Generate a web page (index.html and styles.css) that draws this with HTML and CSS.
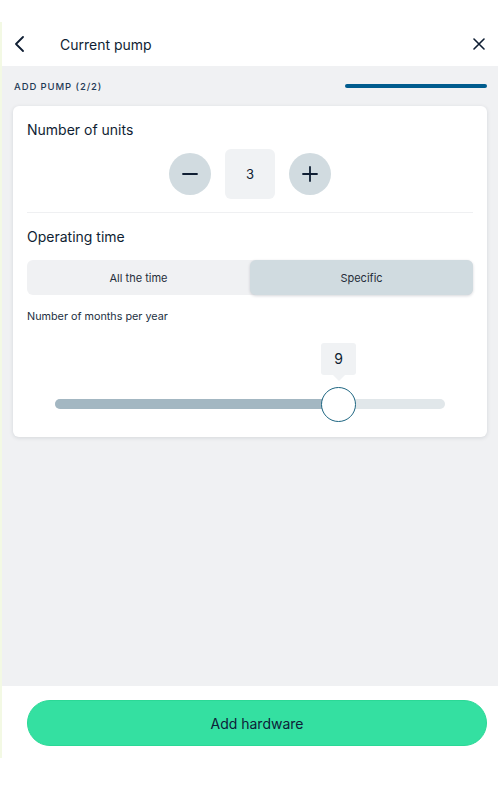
FILE: index.html
```html
<!DOCTYPE html>
<html lang="en">
<head>
<meta charset="utf-8">
<title>Current pump</title>
<link rel="stylesheet" href="styles.css">
</head>
<body>
<div class="app">
  <header class="header">
    <button class="icon-btn back" aria-label="Back">
      <svg width="12" height="16" viewBox="0 0 12 16"><path d="M9 1 L2 8 L9 15" fill="none" stroke="#0f1e33" stroke-width="1.8" stroke-linecap="round" stroke-linejoin="round"/></svg>
    </button>
    <h1 class="title">Current pump</h1>
    <button class="icon-btn close" aria-label="Close">
      <svg width="12" height="12" viewBox="0 0 12 12"><path d="M1 1 L11 11 M11 1 L1 11" fill="none" stroke="#0f1e33" stroke-width="1.6" stroke-linecap="round"/></svg>
    </button>
  </header>
  <main class="main">
    <div class="step-row">
      <span class="step-label">ADD PUMP (2/2)</span>
      <span class="progress"></span>
    </div>
    <section class="card">
      <h2 class="card-title">Number of units</h2>
      <div class="stepper">
        <button class="round-btn" aria-label="Decrease">
          <svg width="16" height="16" viewBox="0 0 16 16"><path d="M1 8 H15" stroke="#0f1e33" stroke-width="1.8" stroke-linecap="round"/></svg>
        </button>
        <div class="count">3</div>
        <button class="round-btn" aria-label="Increase">
          <svg width="16" height="16" viewBox="0 0 16 16"><path d="M1 8 H15 M8 1 V15" stroke="#0f1e33" stroke-width="1.8" stroke-linecap="round"/></svg>
        </button>
      </div>
      <hr class="divider">
      <h2 class="card-title">Operating time</h2>
      <div class="segmented">
        <button class="seg">All the time</button>
        <button class="seg active">Specific</button>
      </div>
      <p class="hint">Number of months per year</p>
      <div class="slider">
        <div class="track">
          <div class="fill" style="width: 72.7%"></div>
          <div class="thumb" style="left: 72.7%">
            <div class="bubble">9</div>
          </div>
        </div>
      </div>
    </section>
  </main>
  <footer class="footer">
    <button class="primary">Add hardware</button>
  </footer>
</div>
</body>
</html>
```

FILE: styles.css
```css
* { box-sizing: border-box; }
html, body { margin: 0; padding: 0; background: #ffffff; }
body {
  font-family: Inter, "Noto Sans", "Liberation Sans", sans-serif;
  color: #0f1e33;
  width: 500px;
  height: 800px;
}
button { font-family: inherit; border: 0; padding: 0; cursor: pointer; }

.app {
  margin-top: 22px;
  width: 498px;
  height: 736px;
  border-left: 2px solid #f3f9e4;
  display: flex;
  flex-direction: column;
  background: #ffffff;
}

.header {
  height: 44px;
  display: flex;
  align-items: center;
  padding: 0 13px 0 12px;
  background: #ffffff;
}
.icon-btn {
  background: transparent;
  display: flex;
  align-items: center;
  justify-content: center;
}
.back { width: 12px; height: 16px; }
.title {
  margin: 0 0 0 34px;
  font-size: 14px;
  font-weight: 400;
  flex: 1;
  color: #0f1e33;
}
.close { width: 12px; height: 12px; }

.main {
  flex: 1;
  background: #f0f1f3;
  padding: 10px 11px 0 11px;
}
.step-row {
  display: flex;
  align-items: center;
  justify-content: space-between;
  height: 20px;
  padding-left: 1px;
}
.step-label {
  font-size: 9.5px;
  font-weight: 500;
  letter-spacing: 0.9px;
  color: #1e3a55;
}
.progress {
  width: 142px;
  height: 4px;
  border-radius: 2px;
  background: #005c8e;
}

.card {
  margin-top: 10px;
  background: #ffffff;
  border-radius: 6px;
  box-shadow: 0 1px 4px rgba(20, 30, 50, 0.12);
  padding: 14px 14px 15px 14px;
}
.card-title {
  margin: 0;
  font-size: 14px;
  line-height: 20px;
  font-weight: 400;
}
.stepper {
  margin-top: 9px;
  display: flex;
  justify-content: center;
  align-items: center;
  gap: 14px;
}
.round-btn {
  width: 42px;
  height: 42px;
  border-radius: 50%;
  background: #d1dbe0;
  display: flex;
  align-items: center;
  justify-content: center;
}
.count {
  width: 50px;
  height: 50px;
  border-radius: 6px;
  background: #f0f2f4;
  display: flex;
  align-items: center;
  justify-content: center;
  font-size: 13px;
}
.divider {
  margin: 13px 0 14px 0;
  border: 0;
  border-top: 1px solid #eff0f2;
}
.segmented {
  margin-top: 13px;
  display: flex;
  height: 35px;
  border-radius: 6px;
  background: #f0f1f3;
}
.seg {
  flex: 1;
  background: transparent;
  font-size: 11px;
  color: #252d3a;
  border-radius: 6px;
}
.seg.active {
  background: #d0dbe0;
  box-shadow: 0 1px 3px rgba(20, 30, 50, 0.18);
}
.hint {
  margin: 15px 0 0 0;
  font-size: 10.8px;
  line-height: 14px;
  color: #23303f;
}
.slider {
  margin-top: 19px;
  padding: 56px 28px 13px 28px;
}
.track {
  position: relative;
  height: 10px;
  border-radius: 5px;
  background: #e1e7ea;
}
.fill {
  height: 10px;
  border-radius: 5px;
  background: #a3b7c2;
}
.thumb {
  position: absolute;
  top: -12.5px;
  width: 35px;
  height: 35px;
  margin-left: -17.5px;
  border-radius: 50%;
  background: #ffffff;
  border: 1px solid #1e6682;
}
.bubble {
  position: absolute;
  left: -1px;
  top: -45px;
  width: 35px;
  height: 32px;
  border-radius: 3px;
  background: #f0f2f4;
  display: flex;
  align-items: center;
  justify-content: center;
  font-size: 14px;
  color: #0f1e33;
}
.bubble::after {
  content: "";
  position: absolute;
  left: 11.5px;
  bottom: -6px;
  border-left: 6px solid transparent;
  border-right: 6px solid transparent;
  border-top: 6px solid #f0f2f4;
}

.footer {
  height: 72px;
  display: flex;
  align-items: center;
  padding: 2px 11px 0 25px;
  background: #ffffff;
}
.primary {
  width: 100%;
  height: 46px;
  border-radius: 23px;
  background: #34e0a1;
  border: 1px solid #2bd896;
  font-size: 14px;
  color: #0d2138;
}
```
